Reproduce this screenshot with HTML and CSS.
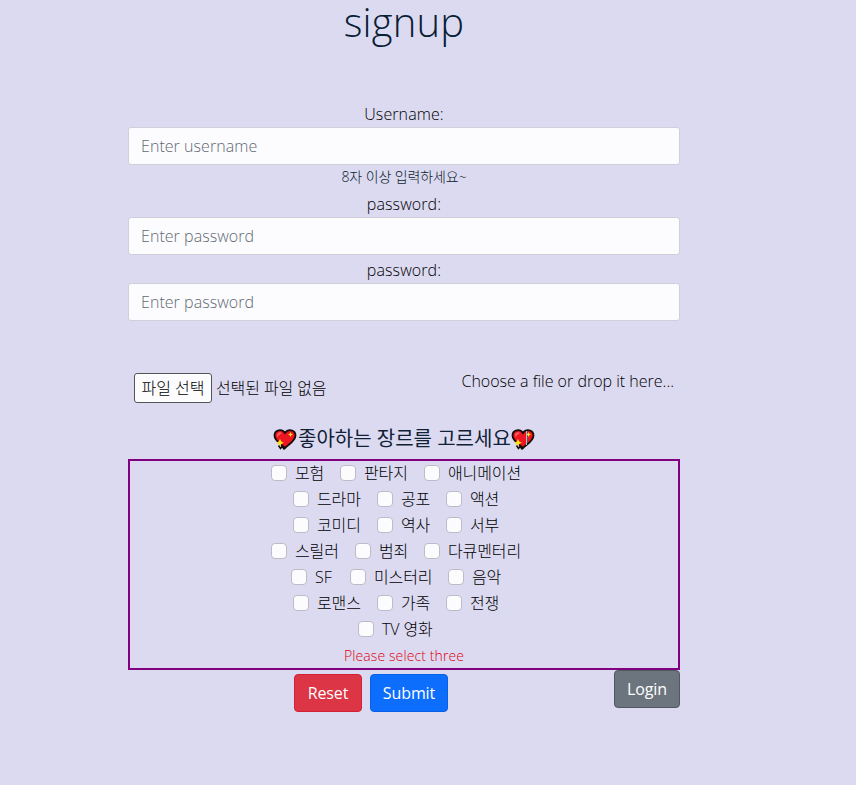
FILE: index.html
```html
<!DOCTYPE html>
<html lang="ko">
<head>
<meta charset="utf-8">
<title>signup</title>
<link rel="stylesheet" href="styles.css">
</head>
<body>
<svg class="defs" width="0" height="0" aria-hidden="true">
  <symbol id="heart" viewBox="0 0 24 22">
    <path d="M12 20 C8 16 1.500 13 1.500 7.500 C1.500 1.500 9 .5 12 5 C15 .5 22.500 1.500 22.500 7.500 C22.500 13 16 16 12 20Z" fill="#ee1620" stroke="#160b0b" stroke-width="1.800"/>
    <path d="M4 9 C3 5 7 3 9 5 L6.500 7Z" fill="#ff5960"/>
    <path d="M17.500 4l.8 1.700 1.700.8-1.700.8-.8 1.700-.8-1.700-1.700-.8 1.700-.8zM7 11l1.300 2.500 2.500 1.300-2.500 1.300L7.200 18.500l-1.500-2.500-2.600-1.200L5.700 13.500z" fill="#ffe21a"/>
    <path d="M5.500 17.500l2 3 1.500-2 2 2.500 1-2" fill="none" stroke="#160b0b" stroke-width="1.500"/>
  </symbol>
</svg>
<main class="page">
  <h1 class="title">signup</h1>
  <form class="form">
    <div class="field">
      <label class="label user" for="u">Username:</label>
      <input class="control" id="u" type="text" placeholder="Enter username">
      <small class="hint">8자 이상 입력하세요~</small>
    </div>
    <div class="field">
      <label class="label" for="p1">password:</label>
      <input class="control" id="p1" type="password" placeholder="Enter password">
    </div>
    <div class="field">
      <label class="label" for="p2">password:</label>
      <input class="control" id="p2" type="password" placeholder="Enter password">
    </div>
    <div class="upload">
      <div class="picker"><button class="file" type="button">파일 선택</button><span class="nofile">선택된 파일 없음</span></div>
      <span class="drop">Choose a file or drop it here...</span>
    </div>
    <h2 class="question"><svg class="heart"><use href="#heart"/></svg><span class="qtext">좋아하는 장르를 고르세요</span><span class="heart-end"><svg class="heart"><use href="#heart"/></svg><i class="caret"></i></span></h2>
    <div class="genres">
      <div class="row"><label class="check"><input type="checkbox"><span class="c2">모험</span></label><label class="check"><input type="checkbox"><span class="c3">판타지</span></label><label class="check"><input type="checkbox"><span class="c5">애니메이션</span></label></div>
      <div class="row"><label class="check"><input type="checkbox"><span class="c3">드라마</span></label><label class="check"><input type="checkbox"><span class="c2">공포</span></label><label class="check"><input type="checkbox"><span class="c2">액션</span></label></div>
      <div class="row"><label class="check"><input type="checkbox"><span class="c3">코미디</span></label><label class="check"><input type="checkbox"><span class="c2">역사</span></label><label class="check"><input type="checkbox"><span class="c2">서부</span></label></div>
      <div class="row"><label class="check"><input type="checkbox"><span class="c3">스릴러</span></label><label class="check"><input type="checkbox"><span class="c2">범죄</span></label><label class="check"><input type="checkbox"><span class="c5">다큐멘터리</span></label></div>
      <div class="row"><label class="check"><input type="checkbox"><span class="sf">SF</span></label><label class="check"><input type="checkbox"><span class="c4">미스터리</span></label><label class="check"><input type="checkbox"><span class="c2">음악</span></label></div>
      <div class="row"><label class="check"><input type="checkbox"><span class="c3">로맨스</span></label><label class="check"><input type="checkbox"><span class="c2">가족</span></label><label class="check"><input type="checkbox"><span class="c2">전쟁</span></label></div>
      <div class="row"><label class="check"><input type="checkbox"><span class="tv">TV 영화</span></label></div>
      <div class="error">Please select three</div>
    </div>
    <div class="actions">
      <div class="main-actions">
        <button class="btn reset" type="reset">Reset</button>
        <button class="btn submit" type="button">Submit</button>
      </div>
      <button class="btn login" type="button">Login</button>
    </div>
  </form>
</main>
</body>
</html>
```
FILE: styles.css
```css
* { box-sizing: border-box; }
body {
  margin: 0;
  min-height: 785px;
  background: #dcdaf1;
  color: #000;
  font: 300 16px/24px "Open Sans", "Noto Sans CJK KR", sans-serif;
}
input, button { font: inherit; color: inherit; }
.defs { display: block; height: 0; }
.page { width: 552px; margin-left: 128px; text-align: center; }
.title {
  margin: 0 0 55px;
  height: 48px;
  font-size: 40px;
  line-height: 43px;
  font-weight: 300;
  letter-spacing: 0.2px;
  color: #082034;
}
.form { display: flex; flex-direction: column; }
.field { margin-bottom: 4px; }
.label { display: block; height: 24px; line-height: 23px; letter-spacing: 0.1px; }
.control {
  display: block;
  width: 100%;
  height: 38px;
  padding: 6px 12px;
  border: 1px solid #ced0dc;
  border-radius: 3px;
  background: #fcfcfe;
  letter-spacing: 0.05px;
}
.control::placeholder { color: #5f6973; opacity: 1; }
.hint { display: block; height: 24px; font-size: 14px; line-height: 24px; letter-spacing: -0.1px; color: #0d1d2c; }
.upload { display: flex; justify-content: space-between; height: 54px; padding: 48px 6px 0; box-sizing: content-box; }
.picker { display: flex; align-items: center; height: 30px; white-space: nowrap; }
.file { width: 78px; height: 30px; padding: 0; border: 1px solid #555; border-radius: 3px; background: #fcfcfe; letter-spacing: 0; }
.nofile { margin-left: 4px; letter-spacing: -0.1px; }
.drop { height: 24px; margin-top: -4px; white-space: nowrap; }
.question { display: flex; justify-content: center; align-items: center; height: 24px; margin: 0 0 8px; font-size: 20px; font-weight: 400; color: #102035; }
.heart { display: block; width: 24px; height: 22px; }
.heart-end { position: relative; }
.caret { position: absolute; left: 15px; top: 3px; width: 1px; height: 14px; background: #5ce0e8; }
.qtext { width: 212px; margin: 0 1px; letter-spacing: 0; white-space: nowrap; }
.genres { height: 211px; border: 2px solid #800080; }
.row { display: flex; justify-content: center; height: 24px; margin-bottom: 2px; }
.check { display: flex; align-items: center; margin-right: 16px; }
.check input { appearance: none; width: 16px; height: 16px; margin: 0 8px 0 0; border: 1px solid #bdbbc6; border-radius: 4px; background: #fcfcfe; }
.check span { white-space: nowrap; text-align: left; letter-spacing: -0.1px; }
.c2 { width: 29px; }
.c3 { width: 44px; }
.c4 { width: 58px; }
.c5 { width: 73px; }
.sf { width: 19px; }
.tv { width: 52px; }
.error { height: 25px; font-size: 14px; line-height: 26px; letter-spacing: 0.1px; color: #dc0010; }
.actions { display: grid; grid-template-columns: 1fr auto 1fr; }
.main-actions { grid-column: 2; display: flex; gap: 8px; margin: 4px 66px 0 0; }
.btn { height: 38px; padding: 0; border: 1px solid; border-radius: 4px; color: #fff; font-weight: 400; letter-spacing: -0.1px; }
.reset { width: 68px; background: #dc3545; border-color: #d62032; }
.submit { width: 78px; background: #0d6efd; border-color: #0660e8; }
.login { width: 66px; background: #6c757d; border-color: #50595f; justify-self: end; }
```
